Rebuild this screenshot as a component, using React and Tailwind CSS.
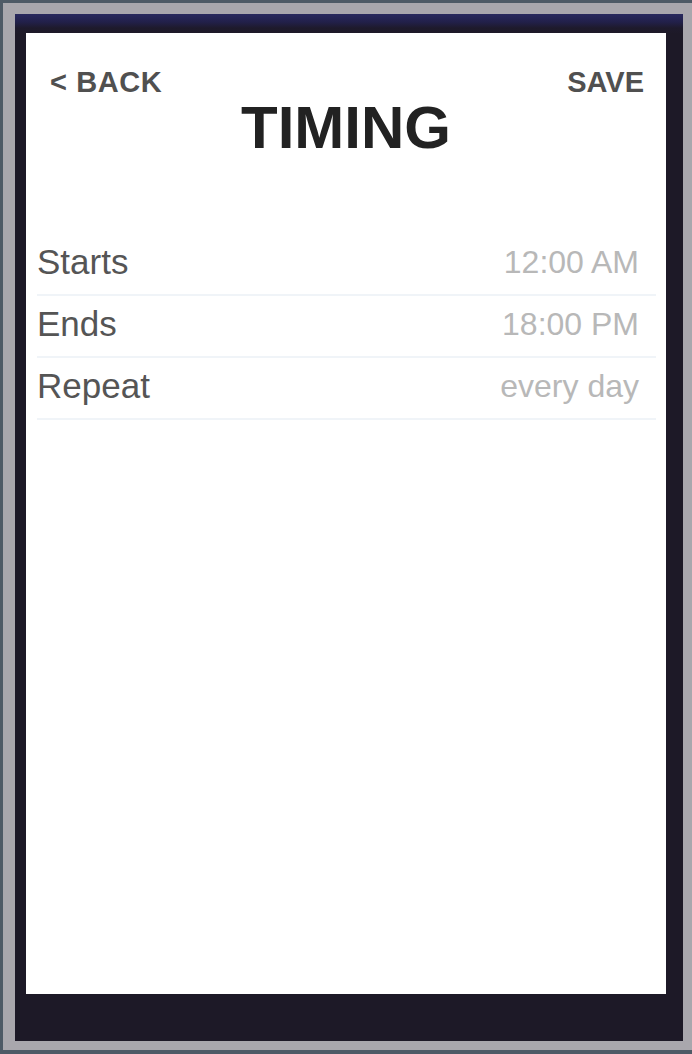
const rows = [
  { label: "Starts", value: "12:00 AM" },
  { label: "Ends", value: "18:00 PM" },
  { label: "Repeat", value: "every day" },
];

export default function App() {
  return (
    <div className="w-[692px] h-[1054px] flex flex-col bg-[#a9a7ad] border-t-[3px] border-l-[3px] border-b-[4px] border-[#4e5a66] pt-[11px] pl-[12px] pr-[9px] pb-[9px] font-['Liberation_Sans',Arial,sans-serif]">
      <div className="flex-1 flex flex-col bg-[linear-gradient(to_bottom,#29295e_0px,#22204a_8px,#1e1a2c_14px,#1d1927_20px)] pt-[19px] pl-[11px] pr-[17px] pb-[47px]">
        <div className="flex-1 bg-white">
          <header className="pt-[33px]">
            <nav className="flex items-center justify-between pl-[24px] pr-[22px]">
              <button type="button" className="text-[29px] leading-[32px] font-bold tracking-[0.6px] text-[#505050]">
                &lt; BACK
              </button>
              <button type="button" className="text-[29px] leading-[32px] font-bold text-[#505050]">
                SAVE
              </button>
            </nav>
            <h1 className="-mt-[2px] text-center text-[60px] leading-[64px] font-bold text-[#222222]">
              TIMING
            </h1>
          </header>

          <ul className="mt-[74px] ml-[11px] mr-[10px]">
            {rows.map((row) => (
              <li
                key={row.label}
                className="h-[62px] flex items-center justify-between border-b-2 border-[#f0f4f8] pb-[4px] pr-[17px]"
              >
                <span className="text-[35px] text-[#555555]">{row.label}</span>
                <span className="text-[32px] text-[#b8b8b8]">{row.value}</span>
              </li>
            ))}
          </ul>
        </div>
      </div>
    </div>
  );
}
